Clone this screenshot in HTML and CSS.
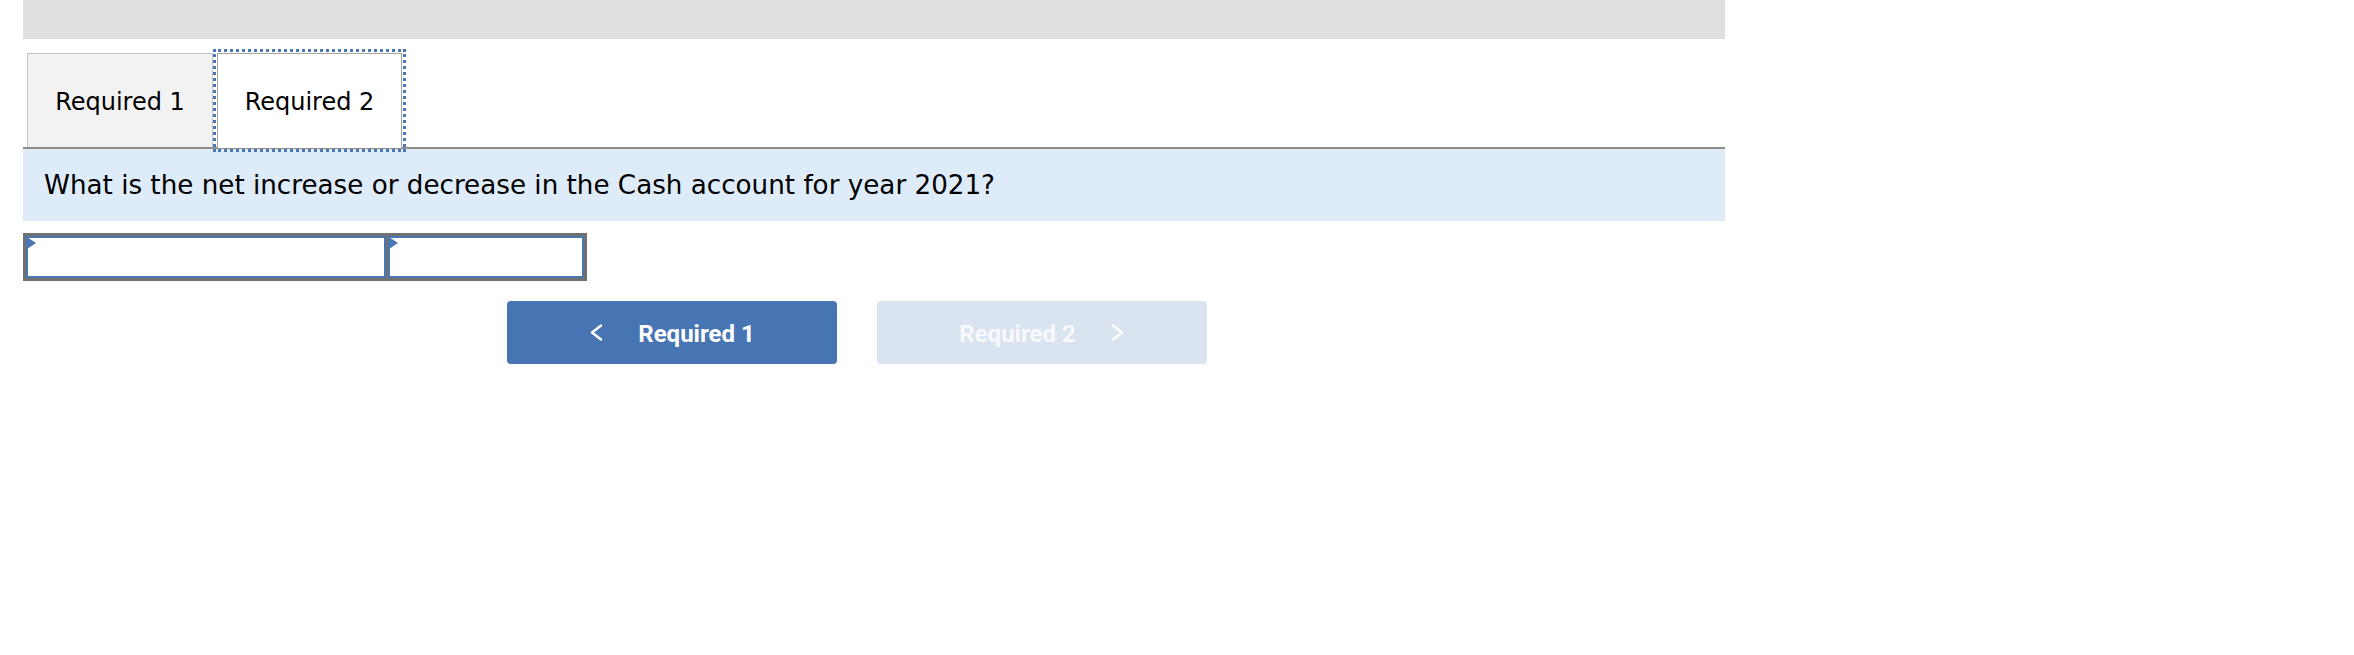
FILE: index.html
```html
<!DOCTYPE html>
<html lang="en">
<head>
<meta charset="utf-8">
<title>Required 2</title>
<link rel="stylesheet" href="styles.css">
</head>
<body>
<div class="page">
  <div class="topbar"></div>
  <div class="tabs">
    <div class="tab tab-inactive">Required 1</div>
    <div class="tab tab-active">Required 2</div>
  </div>
  <div class="question">What is the net increase or decrease in the Cash account for year 2021?</div>
  <div class="answer-row">
    <div class="cell cell-wide"></div>
    <div class="cell cell-narrow"></div>
  </div>
  <div class="nav">
    <button class="nav-btn nav-prev" type="button">
      <svg class="chev" width="14" height="17" viewBox="0 0 14 17"><polyline points="12,1.5 3,8.5 12,15.5" fill="none" stroke="#ffffff" stroke-width="2.4" stroke-linecap="round" stroke-linejoin="round"/></svg>
      <span>Required 1</span>
    </button>
    <button class="nav-btn nav-next" type="button">
      <span>Required 2</span>
      <svg class="chev" width="14" height="17" viewBox="0 0 14 17"><polyline points="2,1.5 11,8.5 2,15.5" fill="none" stroke="#ffffff" stroke-width="2.4" stroke-linecap="round" stroke-linejoin="round"/></svg>
    </button>
  </div>
</div>
</body>
</html>
```

FILE: styles.css
```css
html, body {
  margin: 0;
  padding: 0;
  background: #ffffff;
}

body {
  font-family: "DejaVu Sans", Verdana, sans-serif;
  color: #000000;
}

.page {
  margin-left: 23px;
  width: 1702px;
}

.topbar {
  height: 39px;
  background: #dfdfdf;
}

.tabs {
  display: flex;
  align-items: flex-end;
  margin-top: 14px;
  border-bottom: 2px solid #8c8c8c;
}

.tab {
  box-sizing: border-box;
  display: flex;
  align-items: center;
  justify-content: center;
  margin-left: 4px;
  padding-top: 2px;
  font-size: 24px;
  border-style: solid;
  border-width: 1px 1px 0 1px;
}

.tab-inactive {
  width: 186px;
  height: 94px;
  background: #f2f2f2;
  border-color: #c4c4c4;
}

.tab-active {
  width: 185px;
  height: 95px;
  margin-bottom: -1px;
  background: #ffffff;
  border-color: #a3a3a3;
  outline: 3px dotted #4b77b8;
  outline-offset: 1px;
  position: relative;
  z-index: 1;
}

.question {
  height: 72px;
  display: flex;
  align-items: center;
  padding-left: 21px;
  background: #deebf8;
  font-size: 26.2px;
}

.answer-row {
  display: flex;
  width: fit-content;
  margin-top: 12px;
  gap: 2px;
  border: 3px solid #707070;
  background: #707070;
}

.cell {
  box-sizing: border-box;
  height: 42px;
  border: 2px solid #4a76b4;
  background: #ffffff;
  position: relative;
}

.cell::before {
  content: "";
  position: absolute;
  left: -1px;
  top: -1px;
  border-style: solid;
  border-width: 6.5px 0 6.5px 9px;
  border-color: transparent transparent transparent #4a76b4;
}

.cell-wide {
  width: 360px;
}

.cell-narrow {
  width: 196px;
}

.nav {
  display: flex;
  gap: 40px;
  margin-top: 20px;
  margin-left: 484px;
}

.nav-btn {
  box-sizing: border-box;
  width: 330px;
  height: 63px;
  display: flex;
  align-items: center;
  justify-content: center;
  gap: 35px;
  border: none;
  border-radius: 4px;
  padding: 2px 0 0 0;
  font-family: Roboto, "Liberation Sans", sans-serif;
  font-weight: 700;
  font-size: 24px;
  color: #ffffff;
}

.nav-prev {
  background: #4774b3;
}

.nav-next {
  background: #dae4f0;
  color: #f7f9fc;
}

.chev {
  display: block;
  margin-top: -2px;
}
```
